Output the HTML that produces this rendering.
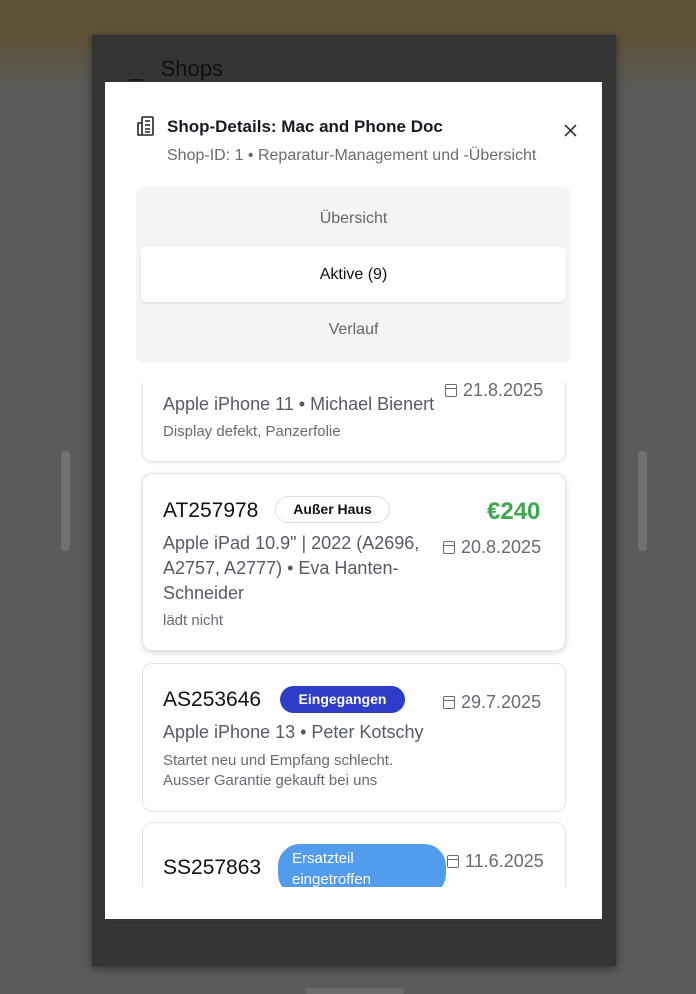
<!DOCTYPE html>
<html><head><style>
*{box-sizing:border-box;margin:0;padding:0}
body{width:696px;height:994px;overflow:hidden;position:relative;font-family:"Liberation Sans",sans-serif;background:#5a5b5a}
.top{position:absolute;left:0;top:0;width:696px;height:90px;background:linear-gradient(180deg,#5e5138 0,#5e5339 40%,rgba(90,91,90,0) 100%)}
.handle{position:absolute;top:451px;width:9px;height:100px;background:#707170;border-radius:4px}
.panel{position:absolute;left:92px;top:35px;width:524px;height:931px;background:#343434;box-shadow:0 2px 8px rgba(0,0,0,.5)}
.modal{position:absolute;left:105px;top:82px;width:497px;height:837px;background:#fff}
.t{position:absolute;white-space:nowrap}
.tabs{position:absolute;left:136px;top:187px;width:435px;height:176px;background:#f4f4f3;border-radius:8px}
.tab{position:absolute;left:0;width:435px;text-align:center;font-size:16px;color:#666}
.act{position:absolute;left:5px;top:60px;width:425px;height:55px;background:#fff;border-radius:6px;box-shadow:0 1px 2px rgba(0,0,0,.1)}
.clip{position:absolute;left:105px;top:383px;width:497px;height:504px;overflow:hidden}
.card{position:absolute;left:37px;width:424px;border:1px solid #e3e3e3;border-radius:10px;background:#fff}
.id{font-size:21px;color:#111}
.sub{font-size:18px;color:#555b66;line-height:25px}
.note{font-size:15px;color:#666b74;line-height:20px}
.date{font-size:18px;color:#666b74}
.cal{display:inline-block;width:12px;height:13px;border:1.5px solid #666b74;border-radius:2px;margin-right:6px;vertical-align:-1px;position:relative}
.cal:before{content:"";position:absolute;left:0;right:0;top:3px;border-top:1.5px solid #666b74}
</style></head><body>
<div class="top"></div>
<div class="handle" style="left:61px"></div>
<div class="handle" style="left:638px"></div>
<div style="position:absolute;left:305px;top:988px;width:100px;height:6px;background:#6a6b6a;border-radius:3px"></div>
<div class="panel">
<div class="t" style="left:38px;top:21px;font-size:22px;color:#111">_&nbsp;&nbsp;&nbsp;Shops</div>
<div style="position:absolute;left:14px;top:890px;width:494px;height:1px;background:#3c3c3c"></div>
</div>
<div class="modal">
<svg style="position:absolute;left:31px;top:34px" width="22" height="20" viewBox="0 0 22 20" fill="none" stroke="#222" stroke-width="1.6"><rect x="6" y="1" width="11" height="18" rx="1"/><path d="M6 7H2v12h4M9 5h5M9 9h5M9 13h5M9 16h5"/></svg>
<div class="t" style="left:62px;top:35px;font-size:17px;font-weight:bold;color:#161a22">Shop-Details: Mac and Phone Doc</div>
<div class="t" style="left:62px;top:65px;font-size:16px;color:#6f6b67">Shop-ID: 1 • Reparatur-Management und -Übersicht</div>
<svg style="position:absolute;left:459px;top:42px" width="13" height="13" viewBox="0 0 13 13" stroke="#333" stroke-width="1.6"><path d="M1 1l11 11M12 1L1 12"/></svg>
</div>
<div class="tabs">
<div class="tab" style="top:23px">Übersicht</div>
<div class="act"></div>
<div class="tab" style="top:79px;color:#111">Aktive (9)</div>
<div class="tab" style="top:134px">Verlauf</div>
</div>
<div class="clip">
<div class="card" style="top:-30px;height:109px;box-shadow:0 1px 3px rgba(0,0,0,.08)">
<div style="position:absolute;left:149px;top:26px;width:138px;height:3px;background:#e94c4c;border-radius:2px"></div>
<div class="t sub" style="left:20px;top:38px">Apple iPhone 11 • Michael Bienert</div>
<div class="t note" style="left:20px;top:68px">Display defekt, Panzerfolie</div>
<div class="t date" style="left:302px;top:26px"><span class="cal"></span>21.8.2025</div>
</div>
<div class="card" style="top:90px;height:178px;box-shadow:0 2px 6px rgba(0,0,0,.15)">
<div class="t id" style="left:20px;top:25px">AT257978</div>
<div class="t" style="left:132px;top:22px;height:27px;width:115px;text-align:center;line-height:25px;border:1px solid #ddd;border-radius:14px;font-size:14px;font-weight:bold;color:#111">Außer Haus</div>
<div class="t" style="left:344px;top:24px;font-size:24px;font-weight:bold;color:#3ea84e">€240</div>
<div class="t sub" style="left:20px;top:57px;white-space:normal;width:280px">Apple iPad 10.9" | 2022 (A2696, A2757, A2777) • Eva Hanten-Schneider</div>
<div class="t date" style="left:300px;top:63px"><span class="cal"></span>20.8.2025</div>
<div class="t note" style="left:20px;top:137px">lädt nicht</div>
</div>
<div class="card" style="top:280px;height:149px">
<div class="t id" style="left:20px;top:24px">AS253646</div>
<div class="t" style="left:137px;top:22px;height:27px;width:125px;text-align:center;line-height:27px;background:#2d3dc8;border-radius:14px;font-size:14px;font-weight:bold;color:#fff">Eingegangen</div>
<div class="t date" style="left:300px;top:28px"><span class="cal"></span>29.7.2025</div>
<div class="t sub" style="left:20px;top:56px">Apple iPhone 13 • Peter Kotschy</div>
<div class="t note" style="left:20px;top:87px">Startet neu und Empfang schlecht.<br>Ausser Garantie gekauft bei uns</div>
</div>
<div class="card" style="top:439px;height:120px">
<div class="t id" style="left:20px;top:33px">SS257863</div>
<div class="t" style="left:135px;top:21px;width:168px;height:52px;padding:4px 14px;line-height:21px;background:#529cee;border-radius:22px;font-size:15px;color:#fff;white-space:normal">Ersatzteil eingetroffen</div>
<div class="t date" style="left:304px;top:28px"><span class="cal"></span>11.6.2025</div>
</div>
</div>
</body></html>
